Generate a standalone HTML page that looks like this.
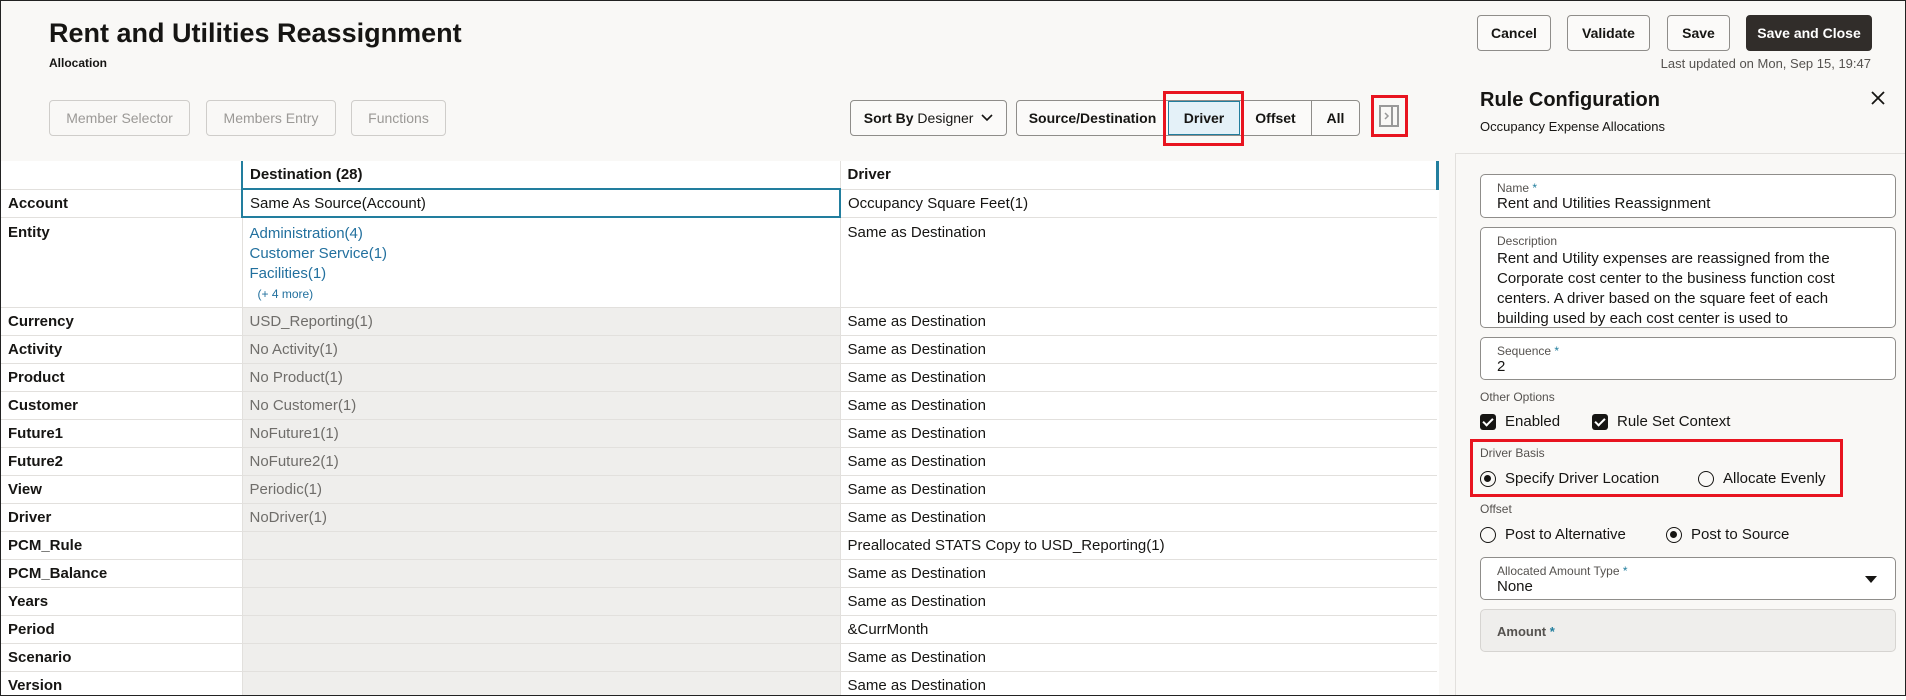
<!DOCTYPE html>
<html><head><meta charset="utf-8"><style>
*{box-sizing:border-box;margin:0;padding:0}
body{width:1906px;height:700px;overflow:hidden;background:#fff;font-family:"Liberation Sans",sans-serif;color:#161513;position:relative}
.frame{position:absolute;left:0;top:0;width:1906px;height:696px;border:1px solid #222;background:#f9f8f6;overflow:hidden}
.a{position:absolute;white-space:nowrap}
.btn{position:absolute;border:1px solid #8f8d8a;border-radius:4px;background:#fbfaf9;font-size:14px;font-weight:bold;display:flex;align-items:center;justify-content:center;color:#161513}
.dis{border-color:#cfcdca;color:#9b9996;font-weight:normal;background:#f9f8f6}
.red{position:absolute;border:3px solid #e8141f}
table{position:absolute;left:0;top:160px;border-collapse:collapse;background:#fff;font-size:15px}
td{border-bottom:1px solid #e2e0dd;height:28px;padding:0 7px;vertical-align:middle;white-space:nowrap}
td.l{width:241px;font-weight:bold;border-right:1px solid #e2e0dd}
td.d{width:598px;border-right:1px solid #e2e0dd}
td.r{width:597px}
td.g{background:#efeeec;color:#6f6d6a}
.lk{color:#22709e}
.fld{position:absolute;left:1479px;width:416px;border:1px solid #8f8d8a;border-radius:5px;background:#fff}
.lab{font-size:12px;color:#55524f;position:absolute;left:16px}
.st{color:#227e9e}
.cb{position:absolute;width:16px;height:16px;background:#161513;border-radius:3px}
.cb:after{content:"";position:absolute;left:5px;top:2px;width:4px;height:8px;border:solid #fff;border-width:0 2px 2px 0;transform:rotate(45deg)}
.rd{position:absolute;width:16px;height:16px;border:1.5px solid #161513;border-radius:50%}
.rd.on:after{content:"";position:absolute;left:3px;top:3px;width:7px;height:7px;background:#161513;border-radius:50%}
.t16{font-size:15px}
</style></head><body><div class="frame">
<div class="a" style="left:48px;top:17px;font-size:27px;font-weight:bold">Rent and Utilities Reassignment</div>
<div class="a" style="left:48px;top:55px;font-size:12px;font-weight:bold">Allocation</div>
<div class="btn dis" style="left:48px;top:99px;width:141px;height:36px">Member Selector</div>
<div class="btn dis" style="left:205px;top:99px;width:130px;height:36px">Members Entry</div>
<div class="btn dis" style="left:350px;top:99px;width:95px;height:36px">Functions</div>
<div class="btn" style="left:849px;top:99px;width:157px;height:36px;font-weight:normal"><b>Sort By</b>&nbsp;Designer&nbsp;&nbsp;<svg width="12" height="8" viewBox="0 0 12 8"><path d="M1 1l5 5 5-5" fill="none" stroke="#161513" stroke-width="1.6"/></svg></div>
<div class="btn" style="left:1015px;top:99px;width:344px;height:36px;justify-content:flex-start">
<span style="width:151px;text-align:center">Source/Destination</span>
<span style="width:72px;height:34px;display:flex;align-items:center;justify-content:center;background:#e4f1f8;border:1px solid #227e9e">Driver</span>
<span style="width:72px;text-align:center;border-right:1px solid #8f8d8a;height:34px;line-height:34px">Offset</span>
<span style="width:47px;text-align:center">All</span></div>
<div class="red" style="left:1162px;top:90px;width:81px;height:55px"></div>
<div class="red" style="left:1370px;top:94px;width:37px;height:42px"></div>
<svg class="a" style="left:1378px;top:104px" width="20" height="22" viewBox="0 0 20 22"><rect x="1" y="1" width="18" height="20" fill="none" stroke="#999" stroke-width="2"/><line x1="13" y1="1" x2="13" y2="21" stroke="#999" stroke-width="2"/><path d="M6 8l3 3-3 3" fill="none" stroke="#999" stroke-width="1.5"/></svg>
<div class="btn" style="left:1476px;top:14px;width:74px;height:36px">Cancel</div>
<div class="btn" style="left:1566px;top:14px;width:83px;height:36px">Validate</div>
<div class="btn" style="left:1666px;top:14px;width:63px;height:36px">Save</div>
<div class="btn" style="left:1745px;top:14px;width:126px;height:36px;background:#312d2a;border-color:#312d2a;color:#fff">Save and Close</div>
<div class="a" style="right:34px;top:55px;font-size:13px;color:#55524f">Last updated on Mon, Sep 15, 19:47</div>
<div class="a" style="left:1479px;top:88px;font-size:20px;font-weight:bold">Rule Configuration</div>
<div class="a" style="left:1479px;top:118px;font-size:13px">Occupancy Expense Allocations</div>
<svg class="a" style="left:1870px;top:90px" width="14" height="14" viewBox="0 0 14 14"><path d="M1 1l12 12M13 1L1 13" stroke="#161513" stroke-width="1.8"/></svg>
<div class="a" style="left:1454px;top:152px;width:452px;height:1px;background:#e2e0dd"></div>
<div class="a" style="left:1454px;top:153px;width:1px;height:550px;background:#e2e0dd"></div>
<table>
<tr><td class="l" style="border-right:2px solid #227e9e"></td><td class="d" style="font-weight:bold">Destination (28)</td><td class="r" style="font-weight:bold;border-right:3px solid #227e9e">Driver</td></tr>
<tr><td class="l">Account</td><td class="d" style="border:2px solid #227e9e">Same As Source(Account)</td><td class="r">Occupancy Square Feet(1)</td></tr>
<tr><td class="l" style="height:90px;vertical-align:top;padding-top:6px">Entity</td><td class="d lk" style="vertical-align:top;padding-top:6px;line-height:20px">Administration(4)<br>Customer Service(1)<br>Facilities(1)<br><span style="font-size:12px;padding-left:8px">(+ 4 more)</span></td><td class="r" style="vertical-align:top;padding-top:6px">Same as Destination</td></tr>
<tr><td class="l">Currency</td><td class="d g">USD_Reporting(1)</td><td class="r">Same as Destination</td></tr>
<tr><td class="l">Activity</td><td class="d g">No Activity(1)</td><td class="r">Same as Destination</td></tr>
<tr><td class="l">Product</td><td class="d g">No Product(1)</td><td class="r">Same as Destination</td></tr>
<tr><td class="l">Customer</td><td class="d g">No Customer(1)</td><td class="r">Same as Destination</td></tr>
<tr><td class="l">Future1</td><td class="d g">NoFuture1(1)</td><td class="r">Same as Destination</td></tr>
<tr><td class="l">Future2</td><td class="d g">NoFuture2(1)</td><td class="r">Same as Destination</td></tr>
<tr><td class="l">View</td><td class="d g">Periodic(1)</td><td class="r">Same as Destination</td></tr>
<tr><td class="l">Driver</td><td class="d g">NoDriver(1)</td><td class="r">Same as Destination</td></tr>
<tr><td class="l">PCM_Rule</td><td class="d g"></td><td class="r">Preallocated STATS Copy to USD_Reporting(1)</td></tr>
<tr><td class="l">PCM_Balance</td><td class="d g"></td><td class="r">Same as Destination</td></tr>
<tr><td class="l">Years</td><td class="d g"></td><td class="r">Same as Destination</td></tr>
<tr><td class="l">Period</td><td class="d g"></td><td class="r">&amp;CurrMonth</td></tr>
<tr><td class="l">Scenario</td><td class="d g"></td><td class="r">Same as Destination</td></tr>
<tr><td class="l">Version</td><td class="d g"></td><td class="r">Same as Destination</td></tr>
</table>
<div class="fld" style="top:173px;height:44px"><div class="lab" style="top:6px">Name <span class="st">*</span></div><div class="a t16" style="left:16px;top:20px">Rent and Utilities Reassignment</div></div>
<div class="fld" style="top:226px;height:101px;overflow:hidden"><div class="lab" style="top:6px">Description</div><div class="t16" style="position:absolute;left:16px;top:21px;line-height:20px;width:380px">Rent and Utility expenses are reassigned from the Corporate cost center to the business function cost centers. A driver based on the square feet of each building used by each cost center is used to</div></div>
<div class="fld" style="top:336px;height:43px"><div class="lab" style="top:6px">Sequence <span class="st">*</span></div><div class="a t16" style="left:16px;top:20px">2</div></div>
<div class="a" style="left:1479px;top:389px;font-size:12px;color:#55524f">Other Options</div>
<div class="cb" style="left:1479px;top:413px"></div><div class="a t16" style="left:1504px;top:412px">Enabled</div>
<div class="cb" style="left:1591px;top:413px"></div><div class="a t16" style="left:1616px;top:412px">Rule Set Context</div>
<div class="red" style="left:1469px;top:438px;width:373px;height:58px"></div>
<div class="a" style="left:1479px;top:445px;font-size:12px;color:#55524f">Driver Basis</div>
<div class="rd on" style="left:1479px;top:470px"></div><div class="a t16" style="left:1504px;top:469px">Specify Driver Location</div>
<div class="rd" style="left:1697px;top:470px"></div><div class="a t16" style="left:1722px;top:469px">Allocate Evenly</div>
<div class="a" style="left:1479px;top:501px;font-size:12px;color:#55524f">Offset</div>
<div class="rd" style="left:1479px;top:526px"></div><div class="a t16" style="left:1504px;top:525px">Post to Alternative</div>
<div class="rd on" style="left:1665px;top:526px"></div><div class="a t16" style="left:1690px;top:525px">Post to Source</div>
<div class="fld" style="top:556px;height:43px"><div class="lab" style="top:6px">Allocated Amount Type <span class="st">*</span></div><div class="a t16" style="left:16px;top:20px">None</div><svg class="a" style="right:18px;top:18px" width="12" height="7"><path d="M0 0h12L6 7z" fill="#161513"/></svg></div>
<div class="fld" style="top:608px;height:43px;background:#efeeec;border-color:#d6d4d1"><div class="a" style="left:16px;top:14px;font-size:13px;font-weight:bold;color:#55524f">Amount <span class="st">*</span></div></div>
</div></body></html>
